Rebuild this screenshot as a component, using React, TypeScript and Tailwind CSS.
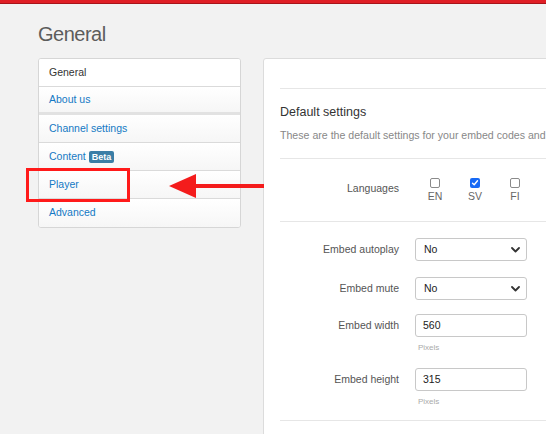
import React from "react";

const Chevron = () => (
  <svg width="9" height="6" viewBox="0 0 9 6" className="absolute right-[6px] top-[8px]">
    <path d="M1 1 L4.5 4.5 L8 1" fill="none" stroke="#333" strokeWidth="1.8" strokeLinecap="round" strokeLinejoin="round" />
  </svg>
);

const Select = () => (
  <div className="relative w-[112px] h-[23px] border border-[#c8c8c8] rounded-[3px] bg-white flex items-center pl-[8px] text-[10.5px] text-[#222]">
    No
    <Chevron />
  </div>
);

const Input = ({ v }: { v: string }) => (
  <div className="w-[112px] h-[23px] border border-[#c8c8c8] rounded-[3px] bg-white flex items-center pl-[7px] text-[10.5px] text-[#222]">
    {v}
  </div>
);

const Row = ({ label, children, className = "" }: { label: string; children: React.ReactNode; className?: string }) => (
  <div className={"flex items-center " + className}>
    <div className="w-[119px] text-right text-[10.5px] text-[#555]">{label}</div>
    <div className="ml-[16px]">{children}</div>
  </div>
);

const Check = ({ label, checked }: { label: string; checked?: boolean }) => (
  <div className="w-[40px] flex flex-col items-center">
    {checked ? (
      <div className="w-[10px] h-[10px] rounded-[2px] bg-[#1769f5] flex items-center justify-center">
        <svg width="8" height="8" viewBox="0 0 8 8">
          <path d="M1.5 4.2 L3.2 5.8 L6.5 1.8" fill="none" stroke="white" strokeWidth="1.4" strokeLinecap="round" strokeLinejoin="round" />
        </svg>
      </div>
    ) : (
      <div className="w-[10px] h-[10px] rounded-[2px] border border-[#8a8a8a] bg-white" />
    )}
    <div className="text-[10.5px] text-[#666] leading-[12px] mt-[2px]">{label}</div>
  </div>
);

export default function App() {
  const rowBase = "h-[28px] flex items-center pl-[10px] text-[10.5px] border-b border-[#dadada]";
  const grad = " bg-gradient-to-b from-white to-[#f6f6f6]";
  return (
    <div
      className="relative w-[546px] h-[434px] overflow-hidden bg-[#f2f2f2]"
      style={{ fontFamily: '"Liberation Sans", Arial, sans-serif' }}
    >
      <div className="h-[4px] bg-[#e01e25] border-b border-[#a8141a]" />
      <div className="ml-[38px] mt-[18px] text-[20px] leading-[24px] text-[#5c5c5c] tracking-[-0.5px]">General</div>
      <div className="flex mt-[12px]">
        <div className="ml-[38px] w-[203px] shrink-0 self-start bg-white border border-[#d6d6d6] rounded-[3px] overflow-hidden">
          <div className={rowBase + " text-[#333] bg-white"}>General</div>
          <div className={rowBase + grad + " text-[#1479c4] border-b-[3px] border-b-[#e2e2e2]"}>About us</div>
          <div className={rowBase + grad + " text-[#1479c4] h-[27px]"}>Channel settings</div>
          <div className={rowBase + grad + " text-[#1479c4]"}>
            Content
            <span className="ml-[3px] px-[3px] h-[12px] leading-[12px] rounded-[2px] bg-[#3b7ea6] text-white text-[9px] font-bold">Beta</span>
          </div>
          <div className={rowBase + grad + " text-[#1479c4]"}>Player</div>
          <div className={rowBase + grad + " text-[#1479c4] border-b-0"}>Advanced</div>
        </div>
        <div className="ml-[22px] w-[420px] shrink-0 h-[420px] bg-white border border-[#dcdcdc] rounded-[3px] pl-[16px] pt-[29px]">
          <div className="h-px bg-[#e6e6e6]" />
          <div className="mt-[15px] text-[12.5px] leading-[16px] text-[#333]">Default settings</div>
          <div className="mt-[8px] text-[10.6px] leading-[14px] text-[#888] whitespace-nowrap">
            These are the default settings for your embed codes and your channel.
          </div>
          <div className="mt-[16px] h-px bg-[#e6e6e6]" />
          <div className="flex items-center mt-[19px]">
            <div className="w-[119px] text-right text-[10.5px] text-[#555] mb-[2px]">Languages</div>
            <div className="ml-[16px] flex">
              <Check label="EN" />
              <Check label="SV" checked />
              <Check label="FI" />
            </div>
          </div>
          <div className="mt-[19px] h-px bg-[#e6e6e6]" />
          <Row label="Embed autoplay" className="mt-[16px]">
            <Select />
          </Row>
          <Row label="Embed mute" className="mt-[16px]">
            <Select />
          </Row>
          <Row label="Embed width" className="mt-[14px]">
            <Input v="560" />
          </Row>
          <div className="ml-[138px] mt-[6px] text-[8px] leading-[10px] text-[#aaa]">Pixels</div>
          <Row label="Embed height" className="mt-[15px]">
            <Input v="315" />
          </Row>
          <div className="ml-[138px] mt-[6px] text-[8px] leading-[10px] text-[#aaa]">Pixels</div>
          <div className="mt-[13px] h-px bg-[#e6e6e6]" />
        </div>
      </div>

      {/* annotation: red box */}
      <div className="absolute left-[26px] top-[168px] w-[104px] h-[34px] border-[3px] border-[#ff1a1a]" />
      {/* annotation: arrow */}
      <svg className="absolute left-[166px] top-[172px]" width="98" height="28" viewBox="0 0 98 28">
        <rect x="26" y="12" width="72" height="4" fill="#f41c1c" />
        <polygon points="3,14 30,2 30,26" fill="#f41c1c" />
      </svg>
    </div>
  );
}
